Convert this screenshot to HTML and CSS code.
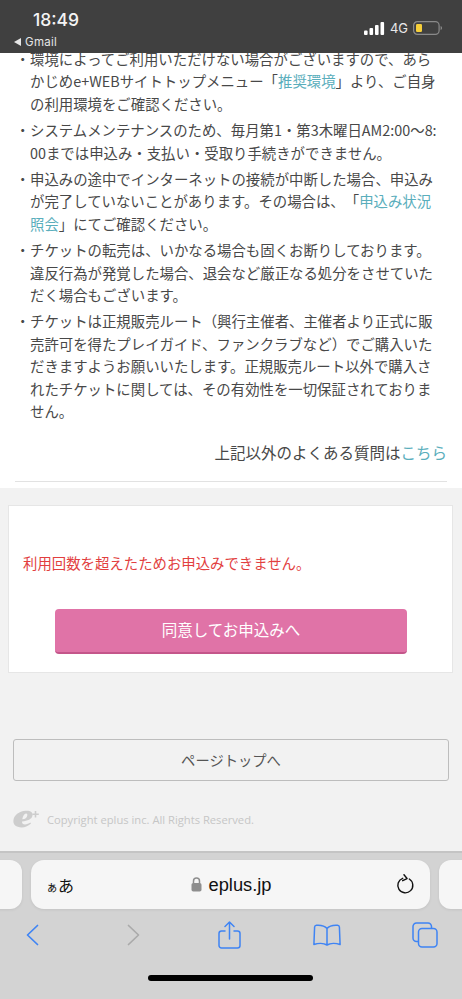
FILE: index.html
```html
<!DOCTYPE html>
<html lang="ja">
<head>
<meta charset="utf-8">
<title>eplus</title>
<link rel="stylesheet" href="styles.css">
</head>
<body>
<div class="phone">
  <header class="status">
    <div class="status-left">
      <div class="time">18:49</div>
      <div class="back-app"><span class="back-tri"></span>Gmail</div>
    </div>
    <div class="status-right">
      <svg class="signal" width="21" height="13" viewBox="0 0 21 13"><rect x="0" y="8.5" width="3.6" height="4.5" rx="1" fill="#fff"/><rect x="5.5" y="6" width="3.6" height="7" rx="1" fill="#fff"/><rect x="11" y="3" width="3.6" height="10" rx="1" fill="#fff"/><rect x="16.5" y="0" width="3.6" height="13" rx="1" fill="#fff"/></svg>
      <span class="net">4G</span>
      <svg class="battery" width="30" height="14" viewBox="0 0 30 14"><rect x=".6" y=".6" width="25.500" height="12.800" rx="3.800" fill="none" stroke="#8a8a8a" stroke-width="1.200"/><rect x="3" y="3" width="6" height="8" rx="1.200" fill="#f6cf3a"/><path d="M27.600 5v4c.9-.3 1.400-1.100 1.400-2s-.5-1.700-1.400-2z" fill="#8a8a8a"/></svg>
    </div>
  </header>
  <main class="page">
    <section class="notes">
      <ul class="note-list">
        <li>・環境によってご利用いただけない場合がございますので、あら<br>かじめe+WEBサイトトップメニュー「<a>推奨環境</a>」より、ご自身<br>の利用環境をご確認ください。</li>
        <li>・システムメンテナンスのため、毎月第1・第3木曜日AM2:00〜8:<br>00までは申込み・支払い・受取り手続きができません。</li>
        <li>・申込みの途中でインターネットの接続が中断した場合、申込み<br>が完了していないことがあります。その場合は、「<a>申込み状況<br>照会</a>」にてご確認ください。</li>
        <li>・チケットの転売は、いかなる場合も固くお断りしております。<br>違反行為が発覚した場合、退会など厳正なる処分をさせていた<br>だく場合もございます。</li>
        <li>・チケットは正規販売ルート（興行主催者、主催者より正式に販<br>売許可を得たプレイガイド、ファンクラブなど）でご購入いた<br>だきますようお願いいたします。正規販売ルート以外で購入さ<br>れたチケットに関しては、その有効性を一切保証されておりま<br>せん。</li>
      </ul>
      <p class="faq">上記以外のよくある質問は<a>こちら</a></p>
      <hr class="rule">
    </section>
    <section class="apply-wrap">
      <div class="card">
        <p class="error">利用回数を超えたためお申込みできません。</p>
        <button class="primary">同意してお申込みへ</button>
      </div>
      <button class="top-btn">ページトップへ</button>
      <div class="copy">
        <svg class="logo" width="26" height="18" viewBox="0 0 26 18"><path fill-rule="evenodd" d="M12.500 .8C17.500 .4 20 2.500 19.500 5.600c-.6 3.600-4.800 5.500-10.500 5.900-.1 1.800 1 3 3 3 2 0 3.800-.8 5.300-1.900l.7.9C15.500 15.900 12.500 17.400 8.500 17.400 3 17.400 0 14.700.4 10.600.9 5.200 6 1.300 12.500 .8zM9.300 9.300c2.800-.3 4.700-1.800 5-3.900.2-1.300-.3-2.100-1.300-2-1.700.1-3.200 2.600-3.700 5.900z" fill="#cdcdcd"/><path d="M22.500 1v6.500M19.300 4.200h6.500" stroke="#cdcdcd" stroke-width="1.600" fill="none"/></svg>
        <span class="copy-text">Copyright eplus inc. All Rights Reserved.</span>
      </div>
    </section>
  </main>
  <footer class="browser">
    <div class="url-row">
      <div class="tab-stub"></div>
      <div class="url">
        <span class="aa"><small>ぁ</small>あ</span>
        <span class="domain">
          <svg width="11" height="15" viewBox="0 0 11 15"><path d="M2.500 6.500V4a3 3 0 0 1 6 0v2.500" fill="none" stroke="#8e8e8e" stroke-width="1.500"/><rect x=".5" y="6" width="10" height="8.500" rx="1.800" fill="#8e8e8e"/></svg>
          eplus.jp
        </span>
        <svg class="reload" width="18" height="21" viewBox="0 0 18 21"><path d="M6.700 4.300A7.500 7.500 0 1 0 13.300 5" fill="none" stroke="#111" stroke-width="1.400" stroke-linecap="round"/><path d="M7.300 .8l3.800 3.100-3.800 3" transform="rotate(12 8 4)" fill="none" stroke="#111" stroke-width="1.400" stroke-linecap="round" stroke-linejoin="round"/></svg>
      </div>
      <div class="tab-stub"></div>
    </div>
    <nav class="tools">
      <svg class="t-back" width="13" height="22" viewBox="0 0 13 22"><path d="M11.500 1.500 1.500 11l10 9.500" fill="none" stroke="#3f84f4" stroke-width="1.700" stroke-linecap="round" stroke-linejoin="round"/></svg>
      <svg class="t-fwd" width="13" height="22" viewBox="0 0 13 22"><path d="M1.500 1.500 11.500 11l-10 9.500" fill="none" stroke="#aaa" stroke-width="1.700" stroke-linecap="round" stroke-linejoin="round"/></svg>
      <svg class="t-share" width="23" height="28" viewBox="0 0 23 28"><path d="M7 10H3.500A2.500 2.500 0 0 0 1 12.500v12A2.500 2.500 0 0 0 3.500 27h16a2.500 2.500 0 0 0 2.500-2.500v-12a2.500 2.500 0 0 0-2.500-2.500H16M11.500 18V1.500M7 5.500l4.500-4.500L16 5.500" fill="none" stroke="#3f84f4" stroke-width="1.500" stroke-linecap="round" stroke-linejoin="round"/></svg>
      <svg class="t-book" width="28" height="22" viewBox="0 0 28 22"><path d="M14 4.500C12 2 9 1 3.500 1.300 2.300 1.400 1.700 2 1.600 3L.9 20.500c3.800-1.300 9.800-1.600 13.100.5 3.300-2.100 9.300-1.800 13.100-.5L26.400 3c-.1-1-.7-1.600-1.900-1.700C19 1 16 2 14 4.500zM14 4.500V21" fill="none" stroke="#3f84f4" stroke-width="1.500" stroke-linejoin="round"/></svg>
      <svg class="t-tabs" width="26" height="26" viewBox="0 0 26 26"><path d="M6.500 19.500H4.500A3.500 3.500 0 0 1 1 16V4.500A3.500 3.500 0 0 1 4.500 1H16a3.500 3.500 0 0 1 3.500 3.500V6.500" fill="none" stroke="#3f84f4" stroke-width="1.500"/><rect x="6.500" y="6.500" width="18.500" height="18.500" rx="3.500" fill="none" stroke="#3f84f4" stroke-width="1.500"/></svg>
    </nav>
    <div class="home-bar"></div>
  </footer>
</div>
</body>
</html>
```
FILE: styles.css
```css
* { box-sizing: border-box; }
html, body { margin: 0; padding: 0; }
body { font-family: "Noto Sans CJK JP", "Noto Sans", sans-serif; text-spacing-trim: space-all; }
.phone { width: 462px; height: 999px; overflow: hidden; display: flex; flex-direction: column; background: #f2f2f2; }

.status { position: relative; z-index: 2; flex: none; height: 53px; background: #404040; color: #fff; display: flex; justify-content: space-between; font-family: Inter, "Liberation Sans", sans-serif; }
.status-left { padding: 9px 0 0 14px; }
.time { font-size: 17.5px; line-height: 22px; font-weight: 500; padding-left: 19px; color: #f4f4f4; }
.back-app { font-size: 11.5px; line-height: 14px; margin-top: 4px; display: flex; align-items: center; gap: 4px; color: #e6e6e6; letter-spacing: .3px; }
.back-tri { width: 0; height: 0; border: 4px solid transparent; border-right: 7px solid #e6e6e6; border-left: 0; }
.status-right { display: flex; align-items: center; gap: 5px; padding: 2px 19px 0 0; height: 54px; }
.net { font-size: 13px; color: #e8e8e8; }

.page { flex: 1; min-height: 0; display: flex; flex-direction: column; }
.notes { background: #fff; height: 435px; padding: 0 15px; }
.note-list { list-style: none; margin: -5px 0 0; padding: 0; font-size: 14.4px; line-height: 22.4px; color: #484848; }
.note-list li { padding-left: 15px; text-indent: -14.400px; margin-bottom: 4px; white-space: nowrap; }
a { color: #5aaebc; }
.faq { margin: 18px 0 0; text-align: right; font-size: 15.5px; line-height: 22px; color: #484848; }
.rule { margin: 18px 0 0; border: 0; border-top: 1px solid #e2e2e2; }

.apply-wrap { flex: 1; background: #f2f2f2; padding: 17px 0 0; display: flex; flex-direction: column; }
.card { margin: 0 9px 0 8px; height: 168px; background: #fff; border: 1px solid #e6e6e6; padding: 45px 47px 0; }
.error { margin: 0 0 0 -33px; font-size: 14.4px; line-height: 24px; color: #e23f3f; }
.primary { display: block; width: 352px; height: 45px; margin: 34px 0 0 -1px; padding: 0 0 3px; border: 0; border-bottom: 2px solid #c4568a; border-radius: 4px; background: #e073a7; color: #fff; font: inherit; font-size: 15.5px; }
.top-btn { display: block; flex: none; margin: 66px 13px 0; width: 436px; height: 42px; background: #f2f2f2; border: 1px solid #bdbdbd; border-radius: 3px; font: inherit; font-size: 14.3px; color: #555; padding: 0 0 2px; }
.copy { display: flex; align-items: center; margin: 25px 0 0 13px; gap: 8px; height: 26px; }
.logo { flex: none; }
.copy-text { font-family: "Open Sans", sans-serif; font-size: 11.2px; color: #c6c6c6; }

.browser { flex: none; height: 148px; background: #d3d3d3; border-top: 2px solid #c4c4c4; }
.url-row { display: flex; gap: 9px; margin: 7px 0 0 -40px; }
.tab-stub { flex: none; width: 62px; height: 49px; background: #f6f6f6; border-radius: 12px; box-shadow: 0 1px 3px rgba(0,0,0,.08); }
.url { flex: none; width: 399px; height: 49px; background: #f6f6f6; border-radius: 13px; box-shadow: 0 1px 3px rgba(0,0,0,.08); display: flex; align-items: center; justify-content: space-between; padding: 0 16px 0 15px; font-family: "Liberation Sans", sans-serif; color: #111; }
.aa { font-family: "Noto Sans CJK JP", sans-serif; font-size: 16px; }
.aa small { font-size: 12px; }
.domain { display: flex; align-items: center; gap: 7px; font-size: 18.3px; margin-right: 8px; }
.tools { display: flex; align-items: center; margin-top: 11px; height: 30px; padding-left: 26px; }
.t-fwd { margin-left: 88px; }
.t-share { margin-left: 78px; }
.t-book { margin-left: 72px; }
.t-tabs { margin-left: 71px; }
.home-bar { width: 165px; height: 6px; border-radius: 3px; background: #000; margin: 25px 0 0 148px; }
```
